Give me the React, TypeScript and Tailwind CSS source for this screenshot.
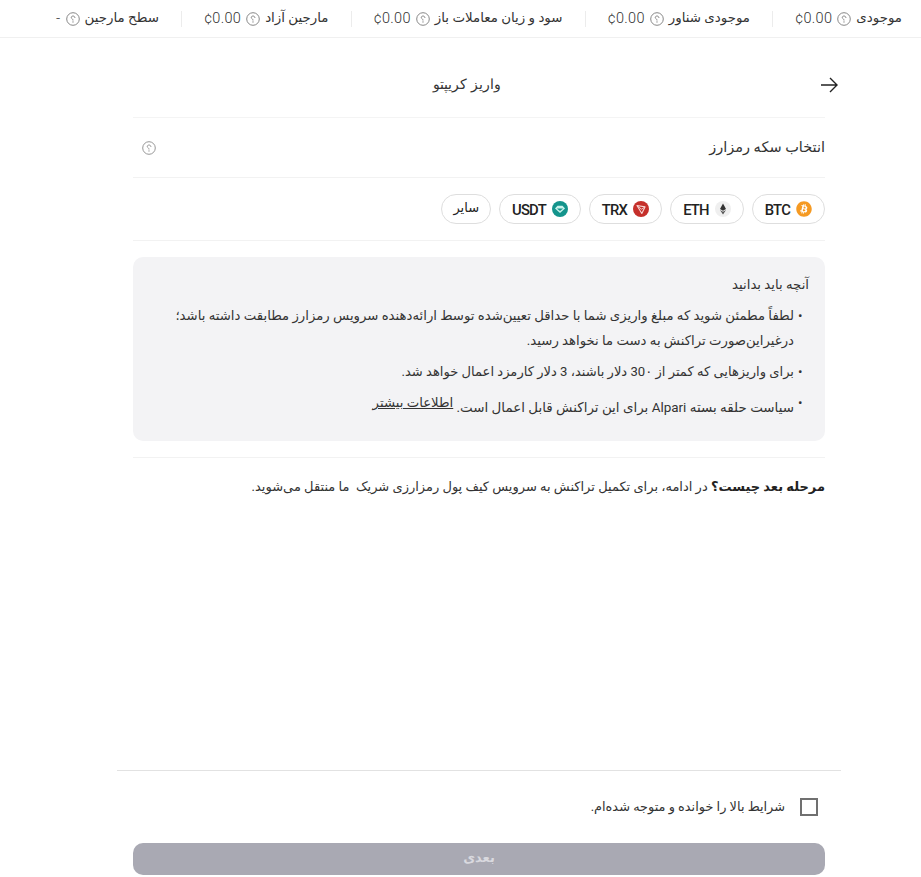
import React from "react";
import { FaBitcoin } from "react-icons/fa";

function Q({ size = 14, color = "#777" }: { size?: number; color?: string }) {
  return (
    <svg width={size} height={size} viewBox="0 0 16 16" fill="none" stroke={color} strokeWidth="1" className="shrink-0">
      <circle cx="8" cy="8" r="7.2" />
      <path d="M10.2 6.4C10 5.2 9.1 4.6 8 4.6S6 5.3 6 6.3c0 1.2 2 1.4 2 3" strokeLinecap="round" />
      <circle cx="8" cy="11.4" r=".7" fill={color} stroke="none" />
    </svg>
  );
}

function Stat({ label, value }: { label: string; value: string }) {
  return (
    <div className="flex items-center gap-[5px] h-[16px] text-[13.4px] text-[#333]">
      <span>{label}</span>
      <Q />
      <span dir="ltr" className="text-[14.5px] font-light text-[#333] tracking-[0.3px]">{value}</span>
    </div>
  );
}

const Divider = () => <div className="w-px h-[16px] bg-[#ececec]" />;

function Pill({ label, icon }: { label: string; icon: React.ReactNode }) {
  return (
    <div className="h-[30px] rounded-full border border-[#dedede] flex items-center gap-[6px] px-[12px] bg-white">
      {icon}
      <span dir="ltr" className="pt-[2px] text-[14.8px] font-medium text-[#222] tracking-[-0.8px]">{label}</span>
    </div>
  );
}

const Coin = ({ color, children }: { color: string; children?: React.ReactNode }) => (
  <svg width="16" height="16" viewBox="0 0 16 16" className="shrink-0">
    <circle cx="8" cy="8" r="8" fill={color} />
    {children}
  </svg>
);

const Bullet = () => <span className="w-[15px] shrink-0 text-left pl-[4px]">•</span>;

export default function App() {
  return (
    <div dir="rtl" className="font-['Roboto','DejaVu_Sans',sans-serif] w-[921px] h-[877px] bg-white overflow-hidden flex flex-col text-[#333]">
      <div className="h-[38px] shrink-0 border-b border-[#f0f0f0] flex items-center pr-[19px] pl-[56px] justify-between">
        <Stat label="موجودی" value="¢0.00" />
        <Divider />
        <Stat label="موجودی شناور" value="¢0.00" />
        <Divider />
        <Stat label="سود و زیان معاملات باز" value="¢0.00" />
        <Divider />
        <Stat label="مارجین آزاد" value="¢0.00" />
        <Divider />
        <Stat label="سطح مارجین" value="-" />
      </div>

      <div className="flex-1 flex flex-col w-[724px] mr-[80px] min-h-0">
        <div className="mx-4 border-b border-[#f4f4f4]">
          <div className="h-[79px] -mx-[13px] flex items-center pt-[15px]">
            <svg width="18" height="18" viewBox="0 0 18 18" fill="none" stroke="#222" strokeWidth="1.4" className="shrink-0">
              <path d="M1 9h16M10 2l7 7-7 7" />
            </svg>
            <span className="flex-1 text-center text-[14.2px] font-light text-[#333] pr-[6px]">واریز کریپتو</span>
          </div>
        </div>

        <div className="flex-1 flex flex-col px-4 min-h-0">
          <div className="h-[60px] shrink-0 flex items-center justify-between border-b border-[#f2f2f2] pl-[9px]">
            <span className="text-[14.5px] text-[#333]">انتخاب سکه رمزارز</span>
            <Q size={14} color="#888" />
          </div>

          <div className="flex gap-[8px] py-[16px] border-b border-[#f2f2f2]">
            <Pill label="BTC" icon={<FaBitcoin className="w-4 h-4 shrink-0 text-[#f59a23]" />} />
            <Pill
              label="ETH"
              icon={
                <Coin color="#efefef">
                  <path d="M8 2.5 5 8l3 1.7L11 8z" fill="#333" />
                  <path d="M5 9l3 4.5L11 9l-3 1.7z" fill="#555" />
                </Coin>
              }
            />
            <Pill
              label="TRX"
              icon={
                <Coin color="#c5302b">
                  <path d="M4 4.5l8 1.4-3.2 6.6z" fill="none" stroke="#f6d5d3" strokeWidth="1.1" strokeLinejoin="round" />
                  <path d="M4.2 4.8l4.4 3.4 3.2-2.2" fill="none" stroke="#f6d5d3" strokeWidth=".9" />
                </Coin>
              }
            />
            <Pill
              label="USDT"
              icon={
                <Coin color="#13948c">
                  <path d="M5.5 4.8h5L13 7.4 8 12 3 7.4z" fill="#c9f3ec" />
                  <path d="M4.8 7.4h6.4L8 10z" fill="#13948c" />
                </Coin>
              }
            />
            <div className="h-[30px] rounded-full border border-[#dedede] flex items-center px-[11px] pb-[3px] text-[13px] font-medium text-[#222]">سایر</div>
          </div>

          <div className="mt-4 h-[184px] shrink-0 rounded-[10px] bg-[#f3f3f5] px-4 pt-[17px] text-[13.25px] leading-[25px] text-[#333]">
            <div className="leading-[22px]">آنچه باید بدانید</div>
            <div className="mt-[7px] flex">
              <Bullet />
              <div className="whitespace-nowrap">
                لطفاً مطمئن شوید که مبلغ واریزی شما با حداقل تعیین‌شده توسط ارائه‌دهنده سرویس رمزارز مطابقت داشته باشد؛
                <br />
                درغیراین‌صورت تراکنش به دست ما نخواهد رسید.
              </div>
            </div>
            <div className="mt-[6px] flex">
              <Bullet />
              <div className="text-[13.1px]">برای واریزهایی که کمتر از 30۰ دلار باشند، 3 دلار کارمزد اعمال خواهد شد.</div>
            </div>
            <div className="mt-[6px] flex">
              <Bullet />
              <div>
                <span className="text-[13.45px]">سیاست حلقه بسته Alpari برای این تراکنش قابل اعمال است.</span>{" "}
                <a className="underline align-[5px]">اطلاعات بیشتر</a>
              </div>
            </div>
          </div>

          <div className="mt-4 border-t border-[#f2f2f2] pt-[19px] text-[13px] leading-[20px] text-[#333]">
            <b className="font-bold text-[#222]">مرحله بعد چیست؟</b> در ادامه، برای تکمیل تراکنش به سرویس کیف پول رمزارزی شریک&nbsp; ما منتقل می‌شوید.
          </div>
        </div>

        <div className="shrink-0 border-t border-[#e2e2e2] px-4 pb-[2px]">
          <label className="h-[72px] flex items-center gap-[15px] pr-[7px] text-[12.9px] text-[#333]">
            <span className="w-[18px] h-[18px] border-2 border-[#707070] shrink-0" />
            <span>شرایط بالا را خوانده و متوجه شده‌ام.</span>
          </label>
          <button className="w-full h-[32px] rounded-[10px] bg-[#a9a9b3] text-[#d9d9df] text-[13px] font-bold flex items-center justify-center pb-[2px]">بعدی</button>
        </div>
      </div>
    </div>
  );
}
